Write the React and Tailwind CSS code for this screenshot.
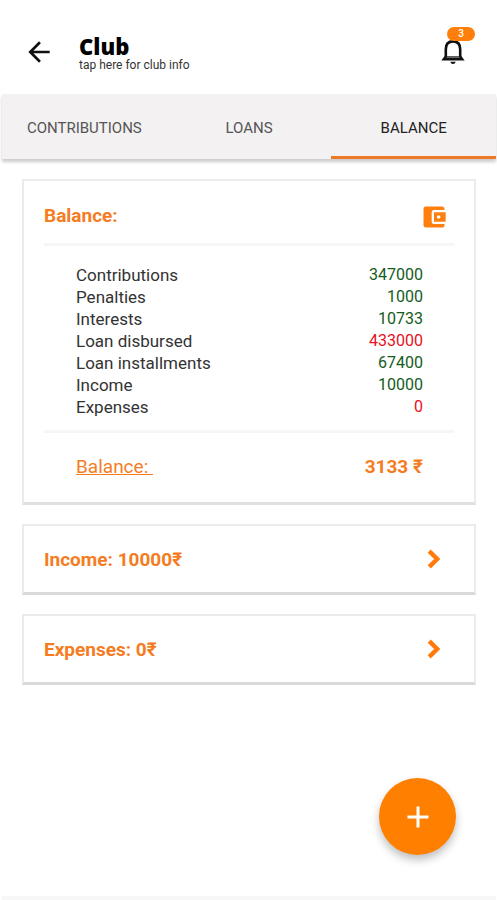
import { MdAccountBalanceWallet, MdAdd, MdArrowBack } from "react-icons/md";

const TABS = ["CONTRIBUTIONS", "LOANS", "BALANCE"];

const ROWS = [
  { label: "Contributions", amount: 347000 },
  { label: "Penalties", amount: 1000 },
  { label: "Interests", amount: 10733 },
  { label: "Loan disbursed", amount: 433000, debit: true },
  { label: "Loan installments", amount: 67400 },
  { label: "Income", amount: 10000 },
  { label: "Expenses", amount: 0, debit: true },
];

function BellIcon() {
  return (
    <svg width="26" height="26" viewBox="0 0 26 26" fill="none" aria-hidden="true">
      <path
        d="M5.8 18V10.2C5.8 5.2 8.6 2.4 13 2.4S20.2 5.2 20.2 10.2V18"
        stroke="#111"
        strokeWidth="2.6"
      />
      <path d="M4.5 17.2h17l3.2 4.2H1.3z" fill="#111" />
      <path d="M7.2 17.2h11.6l1 1.8H6.2z" fill="#666" />
      <path d="M10.4 22.8h5.2c-.3 1.5-1.2 2.2-2.6 2.2s-2.3-.7-2.6-2.2z" fill="#111" />
    </svg>
  );
}

function ChevronIcon() {
  return (
    <svg width="14" height="20" viewBox="0 0 14 20" fill="none" aria-hidden="true">
      <path d="M2.2 2.2L10.2 10L2.2 17.8" stroke="#ff7a0a" strokeWidth="4.4" />
    </svg>
  );
}

function SummaryLink({ label, amount }) {
  return (
    <a
      href="#"
      className="flex h-[71px] items-center justify-between border-2 border-b-3 border-[#eaecec] border-b-[#d9dbdb] bg-white pr-[33px] pl-5 text-[19px] font-bold text-[#f57c1f]"
    >
      <span className="pt-0.5">
        {label}: {amount}₹
      </span>
      <ChevronIcon />
    </a>
  );
}

export default function App() {
  return (
    <div className="flex min-h-screen flex-col bg-white pr-px pl-0.5 font-['Roboto','Noto_Sans',sans-serif]">
      <header className="flex h-[94px] items-center justify-between pt-2.5 pr-[30px] pl-[21px]">
        <div className="flex items-center gap-[10px]">
          <button type="button" aria-label="Back">
            <MdArrowBack size={32} color="#111" />
          </button>
          <button type="button" className="pt-1.5 pl-3.5 text-left">
            <span className="block font-['Open_Sans',sans-serif] text-[22px] leading-5 font-extrabold text-black">
              Club
            </span>
            <span className="block text-xs leading-[18px] text-[#333]">
              tap here for club info
            </span>
          </button>
        </div>
        <button type="button" aria-label="Notifications" className="relative">
          <BellIcon />
          <span className="absolute -top-3 left-[7px] flex h-3.5 w-7 items-center justify-center rounded-full bg-[#ff7f0a] text-[10px] leading-none font-medium text-white">
            3
          </span>
        </button>
      </header>

      <nav className="grid h-[65px] grid-cols-3 bg-[#f3f1f2] shadow-[0_3px_3px_rgba(0,0,0,0.2)]">
        {TABS.map((tab) => (
          <button
            key={tab}
            type="button"
            className={
              tab === "BALANCE"
                ? "border-b-3 border-[#ec7a27] pt-1.5 text-[15px] text-[#222]"
                : "border-b-3 border-transparent pt-1.5 text-[15px] text-[#555]"
            }
          >
            {tab}
          </button>
        ))}
      </nav>

      <main className="flex flex-1 flex-col gap-[19px] px-5 pt-5">
        <section className="border-2 border-b-3 border-[#eaecec] border-b-[#dfe1e1] px-5 pb-[21px]">
          <div className="flex h-[62px] items-center justify-between pt-2.5 pr-1.5">
            <h2 className="pb-0.5 text-[19px] leading-7 font-bold text-[#f57c1f]">Balance:</h2>
            <MdAccountBalanceWallet size={28} color="#ff7f0f" />
          </div>
          <div className="border-y-3 border-[#f6f6f6] pt-[18px] pr-[31px] pb-[12px] pl-8">
            <table className="w-full leading-[22px]">
              <tbody>
                {ROWS.map((row) => (
                  <tr key={row.label}>
                    <th scope="row" className="text-left text-[17px] font-normal text-[#333]">
                      {row.label}
                    </th>
                    <td
                      className={
                        row.debit
                          ? "text-right text-base leading-[22px] text-[#e8101c]"
                          : "text-right text-base leading-[22px] text-[#145c1c]"
                      }
                    >
                      {row.amount}
                    </td>
                  </tr>
                ))}
              </tbody>
            </table>
          </div>
          <div className="flex items-center justify-between pt-5 pr-[31px] pl-8 text-[19px] leading-7 text-[#f57c1f]">
            <span className="whitespace-pre underline">{"Balance: "}</span>
            <span className="font-bold">3133 ₹</span>
          </div>
        </section>

        <SummaryLink label="Income" amount={10000} />
        <SummaryLink label="Expenses" amount={0} />

        <button
          type="button"
          aria-label="Add"
          className="mt-auto mr-5 mb-[41px] flex size-[77px] items-center justify-center self-end rounded-full bg-[#ff8000] shadow-[0_5px_8px_rgba(0,0,0,0.25)]"
        >
          <MdAdd size={36} color="#fff" />
        </button>
      </main>
      <footer className="h-1 bg-[#f7f7f7]" />
    </div>
  );
}
